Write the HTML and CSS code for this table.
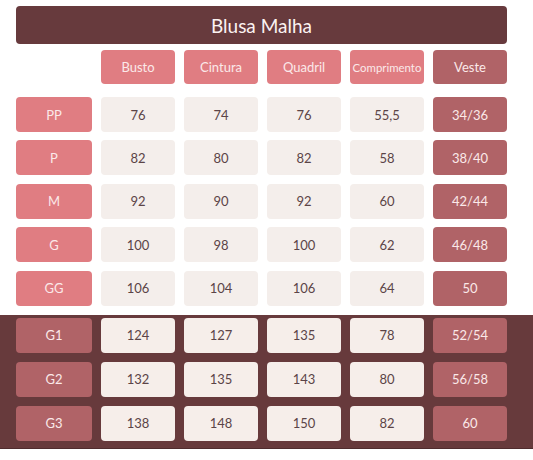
FILE: index.html
```html
<!DOCTYPE html>
<html lang="pt">
<head>
<meta charset="utf-8">
<title>Blusa Malha</title>
<link rel="stylesheet" href="styles.css">
</head>
<body>
<div class="page">
  <h1 class="title">Blusa Malha</h1>
  <div class="grid head">
    <div class="blank"></div>
    <div class="cell hd">Busto</div>
    <div class="cell hd">Cintura</div>
    <div class="cell hd">Quadril</div>
    <div class="cell hd small">Comprimento</div>
    <div class="cell vs">Veste</div>
  </div>
  <div class="grid body">
    <div class="cell hd">PP</div><div class="cell lt">76</div><div class="cell lt">74</div><div class="cell lt">76</div><div class="cell lt">55,5</div><div class="cell vs">34/36</div>
    <div class="cell hd">P</div><div class="cell lt">82</div><div class="cell lt">80</div><div class="cell lt">82</div><div class="cell lt">58</div><div class="cell vs">38/40</div>
    <div class="cell hd">M</div><div class="cell lt">92</div><div class="cell lt">90</div><div class="cell lt">92</div><div class="cell lt">60</div><div class="cell vs">42/44</div>
    <div class="cell hd">G</div><div class="cell lt">100</div><div class="cell lt">98</div><div class="cell lt">100</div><div class="cell lt">62</div><div class="cell vs">46/48</div>
    <div class="cell hd">GG</div><div class="cell lt">106</div><div class="cell lt">104</div><div class="cell lt">106</div><div class="cell lt">64</div><div class="cell vs">50</div>
  </div>
  <div class="band">
    <div class="grid plus">
      <div class="cell vs">G1</div><div class="cell wt">124</div><div class="cell wt">127</div><div class="cell wt">135</div><div class="cell wt">78</div><div class="cell vs">52/54</div>
      <div class="cell vs">G2</div><div class="cell wt">132</div><div class="cell wt">135</div><div class="cell wt">143</div><div class="cell wt">80</div><div class="cell vs">56/58</div>
      <div class="cell vs">G3</div><div class="cell wt">138</div><div class="cell wt">148</div><div class="cell wt">150</div><div class="cell wt">82</div><div class="cell vs">60</div>
    </div>
  </div>
</div>
</body>
</html>
```

FILE: styles.css
```css
html, body {
  margin: 0;
  padding: 0;
  background: #ffffff;
}
body {
  font-family: Lato, "Open Sans", sans-serif;
  width: 533px;
  height: 460px;
  overflow: hidden;
}
.page {
  padding-top: 6px;
}
.title {
  margin: 0 26px 0 16px;
  height: 38px;
  background: #673a3d;
  color: #fbf2f1;
  border-radius: 4px;
  font-size: 19px;
  font-weight: 400;
  display: flex;
  align-items: center;
  justify-content: center;
}
.grid {
  display: grid;
  grid-template-columns: 76px repeat(5, 74px);
  column-gap: 9px;
  margin-left: 16px;
}
.head {
  margin-top: 6px;
  grid-auto-rows: 34px;
}
.body {
  margin-top: 13px;
  grid-auto-rows: 35px;
  row-gap: 8.4px;
}
.cell {
  border-radius: 4px;
  display: flex;
  align-items: center;
  justify-content: center;
  font-size: 13px;
}
.hd {
  background: #e07d82;
  color: #fbe9e9;
}
.small {
  font-size: 11.4px;
}
.vs {
  background: #b06367;
  color: #fbe9e9;
}
.lt {
  background: #f4eeeb;
  color: #5b4447;
}
.wt {
  background: #f6eeea;
  color: #5b4447;
}
.band {
  margin-top: 9px;
  background: #673a3c;
  padding: 3px 0 7px;
  border-bottom: 1px solid #4f2c2e;
}
.plus {
  grid-auto-rows: 35px;
  row-gap: 9px;
}
```
